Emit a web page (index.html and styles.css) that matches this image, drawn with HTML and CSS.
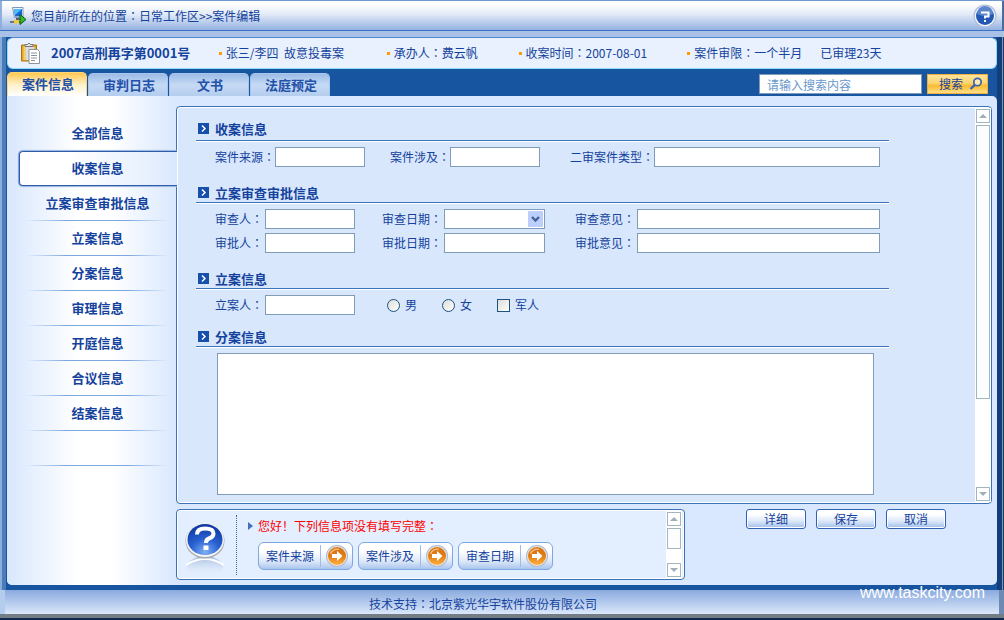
FILE: index.html
```html
<!DOCTYPE html>
<html lang="zh-CN">
<head>
<meta charset="utf-8">
<title>案件编辑</title>
<link rel="stylesheet" href="styles.css">
</head>
<body>
<svg class="defs" aria-hidden="true">
  <defs>
    <radialGradient id="ball" cx="50%" cy="90%" r="90%">
      <stop offset="0" stop-color="#7fb0f6"/><stop offset=".45" stop-color="#2a62d2"/><stop offset="1" stop-color="#0d369e"/>
    </radialGradient>
    <linearGradient id="orange" x1="0" y1="0" x2="0" y2="1">
      <stop offset="0" stop-color="#d8741c"/><stop offset=".5" stop-color="#e07c14"/><stop offset="1" stop-color="#ffb040"/>
    </linearGradient>
    <linearGradient id="fade" x1="0" y1="0" x2="0" y2="1">
      <stop offset="0" stop-color="#8ea6cf" stop-opacity=".75"/><stop offset="1" stop-color="#e3efff" stop-opacity="0"/>
    </linearGradient>
    <symbol id="go" viewBox="0 0 22 22">
      <circle cx="11" cy="11" r="11" fill="#a9bbd8"/>
      <circle cx="11" cy="11" r="10" fill="#f3e6d6"/>
      <circle cx="11" cy="11" r="9" fill="url(#orange)"/>
      <path d="M4.500 9a6.800 6.800 0 0 1 8.500-4.500" fill="none" stroke="#f6c48c" stroke-width="1.300"/>
      <path d="M6 9h5V6l5.500 5-5.500 5V13H6z" fill="#fff"/>
    </symbol>
    <symbol id="chev" viewBox="0 0 11 11">
      <rect width="11" height="11" fill="#1650ac"/>
      <path d="M4 2.500l3 3-3 3" fill="none" stroke="#fff" stroke-width="1.500"/>
    </symbol>
  </defs>
</svg>
<div class="app">
  <header class="titlebar">
    <svg class="pc" viewBox="0 0 18 18" aria-hidden="true">
      <path d="M2.500 .5h10.500v10H4.500z" fill="#eef2f8" stroke="#8597b2"/>
      <path d="M4 2h8v7.500H5z" fill="#1668d4"/>
      <path d="M4 2h8L5 8z" fill="#4cc0f6"/>
      <path d="M6 11h4v2H6z" fill="#59616c"/>
      <path d="M0 15h13" stroke="#6f7680" stroke-width="2"/>
      <rect x="4" y="13" width="5" height="3.500" fill="#f0c838"/>
      <path d="M10 7.500l6 5-6 5z" fill="#35b82c" stroke="#0c5a12"/>
    </svg>
    <nav class="crumb">您目前所在的位置<span class="c">：</span>日常工作区&gt;&gt;案件编辑</nav>
    <button class="help" type="button" aria-label="帮助">
      <svg viewBox="0 0 24 24" aria-hidden="true">
        <circle cx="12" cy="12" r="11.500" fill="#aebfdb"/>
        <circle cx="12" cy="12" r="10.300" fill="#f2f6fc"/>
        <circle cx="12" cy="12" r="9" fill="#2458b4"/>
        <path d="M4 10a8 8 0 0 1 16 0q-8 4-16 0" fill="#5b86cc"/>
        <path d="M8 8.500h7.500v4H12v2" fill="none" stroke="#fff" stroke-width="2"/><path d="M11 16h2v2h-2z" fill="#fff"/>
      </svg>
    </button>
  </header>

  <div class="frame">
    <section class="info">
      <svg class="clip" viewBox="0 0 20 22" aria-hidden="true">
        <path d="M1 3h15v16H1z" fill="#e8a520" stroke="#a87516"/>
        <path d="M3 4h2v14H3z" fill="#f7cf66"/>
        <path d="M4.500 4.500V2.500h2.500Q8.500-.5 10 2.500h2.500v2z" fill="#e4e6ea" stroke="#777"/>
        <path d="M5 5h9v13H5z" fill="#d9dde4"/>
        <path d="M8.500 7.500H17l2 2v12H8.500z" fill="#fff" stroke="#8c929c"/>
        <path d="M10.500 11h6M10.500 13.500h6M10.500 16h6M10.500 18.500h4" stroke="#8a93a2"/>
      </svg>
      <div class="facts">
        <h1>2007高刑再字第0001号</h1>
        <span class="dot">张三/李四&nbsp; 故意投毒案</span>
        <span class="dot">承办人<span class="c">：</span>费云帆</span>
        <span class="dot">收案时间<span class="c">：</span>2007-08-01</span>
        <span class="dot">案件审限<span class="c">：</span>一个半月</span>
        <span>已审理23天</span>
      </div>
    </section>

    <div class="tabbar">
      <nav class="tabs">
        <a class="tab on" href="#a">案件信息</a>
        <a class="tab" href="#b">审判日志</a>
        <a class="tab" href="#c">文书</a>
        <a class="tab" href="#d">法庭预定</a>
      </nav>
      <form class="search">
        <input type="text" placeholder="请输入搜索内容" aria-label="搜索内容">
        <button type="button">搜索
          <svg viewBox="0 0 14 14" aria-hidden="true"><circle cx="8.500" cy="5" r="3.700" fill="#fde9b4" stroke="#3c62ac" stroke-width="1.700"/><path d="M5.800 7.800L1.500 12" stroke="#3c62ac" stroke-width="2.400"/></svg>
        </button>
      </form>
    </div>

    <main class="body">
      <nav class="side">
        <a href="#1">全部信息</a>
        <a class="on" href="#2">收案信息</a>
        <a class="line" href="#3">立案审查审批信息</a>
        <a class="line" href="#4">立案信息</a>
        <a class="line" href="#5">分案信息</a>
        <a class="line" href="#6">审理信息</a>
        <a class="line" href="#7">开庭信息</a>
        <a class="line" href="#8">合议信息</a>
        <a class="line" href="#9">结案信息</a>
        <div class="line"></div>
      </nav>

      <div class="work">
        <div class="panel">
          <form class="form">
            <section>
              <h2><svg aria-hidden="true"><use href="#chev"/></svg>收案信息</h2>
              <div class="row">
                <label for="src">案件来源<span class="c">：</span></label><input id="src" type="text">
                <label class="g25" for="inv">案件涉及<span class="c">：</span></label><input id="inv" type="text">
                <label class="g30" for="typ">二审案件类型<span class="c">：</span></label><input class="grow" id="typ" type="text">
              </div>
            </section>
            <section>
              <h2><svg aria-hidden="true"><use href="#chev"/></svg>立案审查审批信息</h2>
              <div class="row loose">
                <label for="r1">审查人<span class="c">：</span></label><input id="r1" type="text">
                <label class="g27" for="r2">审查日期<span class="c">：</span></label>
                <select class="date" id="r2"><option></option></select>
                <label class="g30" for="r3">审查意见<span class="c">：</span></label><input class="grow" id="r3" type="text">
              </div>
              <div class="row loose">
                <label for="p1">审批人<span class="c">：</span></label><input id="p1" type="text">
                <label class="g27" for="p2">审批日期<span class="c">：</span></label><input class="date" id="p2" type="text">
                <label class="g30" for="p3">审批意见<span class="c">：</span></label><input class="grow" id="p3" type="text">
              </div>
            </section>
            <section>
              <h2><svg aria-hidden="true"><use href="#chev"/></svg>立案信息</h2>
              <div class="row loose">
                <label for="f1">立案人<span class="c">：</span></label><input id="f1" type="text">
                <div class="choices">
                  <label><input type="radio" name="sex">男</label>
                  <label><input type="radio" name="sex">女</label>
                  <label><input type="checkbox">军人</label>
                </div>
              </div>
            </section>
            <section class="last">
              <h2 id="split"><svg aria-hidden="true"><use href="#chev"/></svg>分案信息</h2>
              <textarea aria-labelledby="split"></textarea>
            </section>
          </form>
          <div class="scroll">
            <button class="up" type="button" aria-label="向上"></button>
            <div class="thumb"></div>
            <button class="down" type="button" aria-label="向下"></button>
          </div>
        </div>

        <div class="lower">
          <section class="notice">
            <svg class="ask" viewBox="0 0 40 54" aria-hidden="true">
              <path d="M2 46a18 12 0 0 1 36 0l-2 8H4z" fill="url(#fade)"/>
              <path d="M1 43Q20 31 39 43" fill="none" stroke="#fff" stroke-width="2"/>
              <ellipse cx="20" cy="19" rx="19.500" ry="17.500" fill="#a5a9b0"/>
              <ellipse cx="20" cy="18" rx="19" ry="17" fill="#f3f4f6"/>
              <ellipse cx="20" cy="17.500" rx="17.500" ry="15.500" fill="url(#ball)"/>
              <path d="M12 12.500q0-6 8-6 8.500 0 8.500 5 0 3.500-4.500 5-3 1-3 4.500" fill="none" stroke="#fff" stroke-width="4"/>
              <path d="M18.500 23.500h5v4.500h-5z" fill="#fff"/>
            </svg>
            <div class="msg">
              <p>您好！下列信息项没有填写完整<span class="c">：</span></p>
              <div class="jumps">
                <button type="button">案件来源<svg aria-hidden="true"><use href="#go"/></svg></button>
                <button type="button">案件涉及<svg aria-hidden="true"><use href="#go"/></svg></button>
                <button type="button">审查日期<svg aria-hidden="true"><use href="#go"/></svg></button>
              </div>
            </div>
            <div class="scroll">
              <button class="up" type="button" aria-label="向上"></button>
              <div class="thumb"></div>
              <button class="down" type="button" aria-label="向下"></button>
            </div>
          </section>
          <div class="actions">
            <button type="button">详细</button>
            <button type="button">保存</button>
            <button type="button">取消</button>
          </div>
        </div>
      </div>
    </main>
  </div>

  <footer class="foot">
    <p>技术支持<span class="c">：</span>北京紫光华宇软件股份有限公司</p>
    <span class="mark">www.taskcity.com</span>
  </footer>
</div>
</body>
</html>
```
FILE: styles.css
```css
* { box-sizing: border-box; }
body, h1, h2, p { margin: 0; }
body, button, input, select, textarea {
  font-family: "Noto Sans CJK SC", sans-serif;
  font-size: 12px;
  line-height: 16px;
  color: #14429c;
}
button, input, select, textarea { padding: 0; border-radius: 0; }
a { color: inherit; text-decoration: none; }
.c { display: inline-block; font-family: "Noto Sans CJK TC", sans-serif; }
.defs { position: absolute; width: 0; height: 0; }

.app { min-height: 100vh; display: flex; flex-direction: column; background: #1855a0; }

.titlebar {
  height: 31px;
  display: flex;
  align-items: center;
  padding: 1px 7px 0 10px;
  border-top: 1px solid #6f9ad0;
  border-bottom: 1px solid #3c72c4;
  background: linear-gradient(#fff 10%, #e3ebf7 45%, #a9c1e8 85%, #93b2e0);
  box-shadow: inset 2px 0 #8fb0de, inset -2px 0 #4c6c9c;
}
.pc { width: 18px; height: 18px; margin-right: 3px; }
.crumb { flex: 1; }
.help { width: 24px; height: 24px; border: 0; background: none; }
.help svg { display: block; width: 24px; height: 24px; }

.frame {
  flex: 1;
  display: flex;
  flex-direction: column;
  padding: 6px 7px 5px;
  background:
    linear-gradient(#a9c1e6, #a9c1e6) top / 100% 6px no-repeat,
    linear-gradient(90deg, #8aaedb 2px, #4a7cba 2px, #4a7cba 6px, #1855a0 6px) left / 7px 100% no-repeat,
    linear-gradient(90deg, #123f7c 5px, #8a929a 5px, #8a929a 6px, #123f7c 6px) right / 7px 100% no-repeat,
    #1855a0;
}
.info {
  height: 32px;
  display: flex;
  align-items: center;
  padding-left: 12px;
  border: 1px solid #8fdcf8;
  border-top-color: #4c8ccc;
  border-radius: 6px;
  background: #e8f1fd;
}
.clip { width: 21px; height: 22px; flex: none; margin-right: 10px; }
.facts { flex: 1; display: grid; grid-template-columns: 168fr 168fr 132fr 169fr 133fr 176fr; align-items: center; white-space: nowrap; }
.facts h1 { font-size: 13px; line-height: 16px; }
.dot { display: flex; align-items: center; }
.dot::before { content: ""; width: 3px; height: 3px; margin-right: 4px; background: #ff9a00; }

.tabbar { height: 27px; display: flex; justify-content: space-between; align-items: flex-end; }
.tabs { display: flex; align-items: flex-end; gap: 1px; }
.tab {
  width: 80px;
  height: 23px;
  padding-left: 2px;
  border: 1px solid #a9c6ee;
  border-bottom: 0;
  border-radius: 5px 5px 0 0;
  background: linear-gradient(#9dbce6, #c6daf5 50%, #b4cdee);
  color: #2350a8;
  font-size: 13px;
  font-weight: bold;
  line-height: 22px;
  text-align: center;
}
.tab.on { height: 24px; border-color: #ffd67a; background: linear-gradient(#ffc851, #fff0c8 50%, #fff); }
.search { display: flex; gap: 5px; align-self: center; padding-right: 9px; margin-top: 3px; }
.search input { width: 163px; height: 20px; padding: 0 7px; border: 1px solid #7f9db9; background: #fff; }
.search input::placeholder { color: #6a97cc; opacity: 1; }
.search button {
  width: 61px;
  height: 20px;
  display: flex;
  align-items: center;
  justify-content: flex-end;
  gap: 6px;
  padding-right: 4px;
  border: 1px solid #f0b040;
  background: linear-gradient(#ffe49c, #fdd470 45%, #fbbb30 60%, #ffe088);
}
.search svg { width: 14px; height: 14px; }

.body { flex: 1; display: flex; border-radius: 0 5px 5px 5px; background: #d9e8fe; padding-right: 5px; }
.side {
  width: 169px;
  flex: none;
  padding-top: 20px;
  border-radius: 0 0 0 5px;
  background: linear-gradient(90deg, #d8e7fd, #fff 42%, #fff 62%, #d9e8fe);
}
.side a, .side div {
  display: block;
  height: 35px;
  margin-left: 12px;
  font-size: 13px;
  font-weight: bold;
  line-height: 34px;
  text-align: center;
}
.side .line {
  background: linear-gradient(90deg, transparent 4%, #7ca8e0 30%, #7ca8e0 70%, transparent 95%) bottom / 100% 1px no-repeat;
}
.side .on {
  position: relative;
  margin-right: -1px;
  padding-right: 2px;
  border: 1px solid #2f5ca8;
  border-right: 0;
  border-radius: 4px 0 0 4px;
  background: linear-gradient(90deg, #fff 30%, #e8f1fe 80%, #d9e8fe);
  line-height: 32px;
  box-shadow: -1px 0 1px #7d9fd4, 0 -1px 1px #9ab6e2, 0 1px 1px #9ab6e2;
  clip-path: inset(-2px 0 -2px -2px);
}

.work { flex: 1; min-width: 0; display: flex; flex-direction: column; padding: 10px 0 5px; gap: 5px; }
.panel {
  flex: 1;
  display: flex;
  border: 1px solid #3c72b8;
  border-radius: 4px;
  box-shadow: inset 0 0 0 1px #fff;
  background: #d8e7fc;
}
.form { flex: 1; display: flex; flex-direction: column; gap: 16px; padding: 12px 86px 8px 19px; }
h2 {
  height: 22px;
  display: flex;
  align-items: center;
  gap: 6px;
  padding: 0 0 2px 2px;
  margin-bottom: 6px;
  border-bottom: 1px solid #3c74bc;
  box-shadow: 0 1px #fff;
  font-size: 13px;
  line-height: 16px;
}
section + section h2 { height: 20px; padding-bottom: 0; }
h2 svg { width: 11px; height: 11px; }
.row { display: flex; padding: 0 9px 0 19px; align-items: center; }
.row + .row { margin-top: 4px; }
.row label { white-space: nowrap; }
.loose > label { padding-right: 2px; }
.row > input, .row > select { width: 90px; height: 20px; border: 1px solid #7f9db9; background: #fff; }
.row > .date { width: 101px; }
.row > .grow { flex: 1; min-width: 0; }
.g25 { margin-left: 25px; }
.g27 { margin-left: 27px; }
.g30 { margin-left: 30px; }
.row > select {
  appearance: none;
  background: #fff url("data:image/svg+xml,%3Csvg xmlns='http://www.w3.org/2000/svg' width='15' height='16'%3E%3Crect width='15' height='16' rx='1' fill='%23bccffa'/%3E%3Cpath d='M4 6l3.500 3.500L11 6' fill='none' stroke='%2344619a' stroke-width='2.400'/%3E%3C/svg%3E") right 1px center no-repeat;
}
.choices { display: flex; gap: 25px; margin-left: 32px; }
.choices label { display: flex; align-items: center; gap: 5px; }
.choices input { appearance: none; width: 13px; height: 13px; margin: 0; border: 1px solid #1c5180; background: linear-gradient(135deg, #dcdcd7, #fff); }
.choices input[type="radio"] { border-radius: 50%; }
.last { flex: 1; display: flex; flex-direction: column; margin-top: -4px; }
.last textarea { flex: 1; min-height: 141px; margin: 0 15px 0 21px; border: 1px solid #7f9db9; background: #fff; resize: none; }

.scroll { width: 16px; flex: none; display: flex; flex-direction: column; gap: 2px; padding: 1px; margin: 1px 0; background: #fff; }
.scroll button { width: 14px; height: 14px; display: grid; place-items: center; border: 1px solid #a3b5be; background: #fff; }
.scroll button::before { content: ""; border: 4px solid transparent; border-top-width: 0; border-bottom-color: #9fb0b8; }
.scroll .down { margin-top: auto; }
.scroll .down::before { border-width: 4px 4px 0; border-top-color: #9fb0b8; }
.thumb { width: 14px; height: 70%; border: 1px solid #a3b5be; background: #fcfdfd; }

.lower { display: flex; justify-content: space-between; align-items: flex-start; }
.notice {
  flex: 0 1 509px;
  height: 71px;
  display: flex;
  padding-right: 2px;
  border: 1px solid #3c72b8;
  border-radius: 4px;
  box-shadow: inset 0 0 0 1px #fff;
  background: #e3effe;
}
.ask { width: 40px; height: 54px; margin: 12px 11px 0 8px; }
.msg { flex: 1; margin: 5px 0 4px; padding: 3px 0 0 11px; border-left: 1px dotted #3c66a8; }
.msg p { display: flex; align-items: center; color: #f00; }
.msg p::before { content: ""; margin-right: 5px; border: 4px solid transparent; border-left: 5px solid #3f70bc; border-right: 0; }
.jumps { display: flex; gap: 5px; margin: 8px 0 0 10px; }
.jumps button {
  width: 95px;
  height: 28px;
  display: flex;
  align-items: center;
  padding-left: 7px;
  border: 1px solid #7ea8e2;
  border-radius: 6px;
  background: linear-gradient(#fff 30%, #dde8f8 70%, #a9c5ee);
}
.jumps svg { width: 28px; height: 22px; padding-left: 5px; margin-left: 6px; border-left: 1px solid #9dbce8; }
.notice .thumb { height: 21px; }
.actions { display: flex; gap: 10px; padding-right: 46px; }
.actions button {
  width: 60px;
  height: 20px;
  border: 1px solid #2f62b4;
  border-radius: 3px;
  background: linear-gradient(#fff 25%, #d8e5f8 65%, #9fbeea);
  box-shadow: inset 0 0 0 1px #fff;
}

.foot {
  position: relative;
  height: 30px;
  padding: 6px 0 0 369px;
  background:
    linear-gradient(#747c86 4px, #10284c 4px) bottom / 100% 6px no-repeat,
    linear-gradient(90deg, #b4cdee 5px, transparent 5px, transparent calc(100% - 5px), #6c8ab4 calc(100% - 5px)),
    linear-gradient(#8aaade, #dbe8fb 24px);
}
.mark {
  position: absolute;
  right: 19px;
  top: -6px;
  font: 16px/18px "Liberation Sans", Arial, sans-serif;
  color: #fff;
}
```
